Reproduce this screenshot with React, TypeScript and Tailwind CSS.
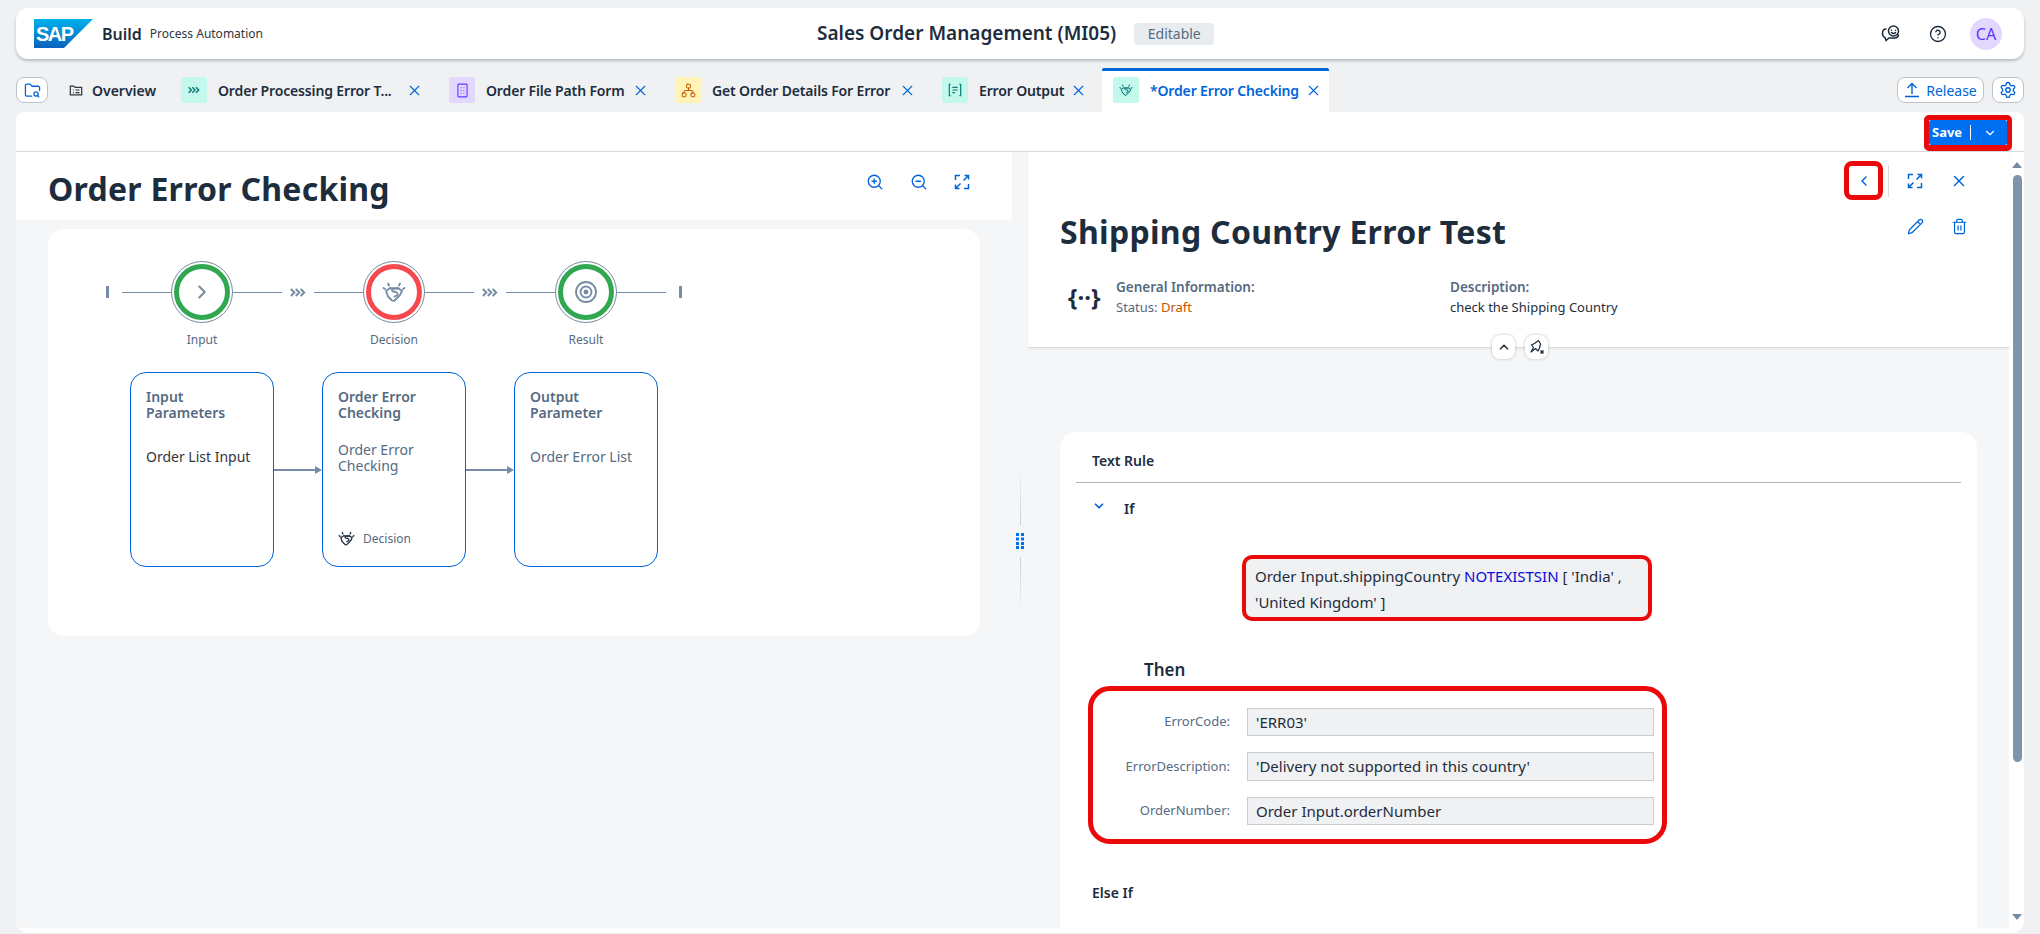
import { ChevronDown, ChevronLeft, ChevronRight, ChevronUp, CircleHelp, FolderSearch, Network, Pencil, Settings, Trash2, X, ZoomIn, ZoomOut } from "lucide-react";
import type { ReactNode } from "react";

function Triple({ className }: { className?: string }) {
    return (
        <svg viewBox="0 0 18 10" className={className} fill="none" stroke="currentColor" strokeWidth="2.2">
            <path d="M1 1l4 4-4 4M6.500 1l4 4-4 4M12 1l4 4-4 4" />
        </svg>
    );
}

function DecisionIcon({ className }: { className?: string }) {
    return (
        <svg viewBox="0 0 24 24" className={className} fill="none" stroke="currentColor" strokeWidth="1.8" strokeLinejoin="round" strokeLinecap="round">
            <path d="M1.500 8l1.500 1M6 3.500l1 2M22.500 8L21 9M18 3.500l-1 2" />
            <path d="M4 11l4-3 4 .5 4-.5 4 3-2 4-6 6-2-.5-4-4z" />
            <path d="M16 8.500h-4c-2 0-3 2-1 3l3 .5c2 .5 2 3 .5 3.500l-2 1" />
        </svg>
    );
}

function ExpandIcon({ className }: { className?: string }) {
    return (
        <svg viewBox="0 0 16 16" className={className} fill="none" stroke="currentColor" strokeWidth="1.500">
            <path d="M1.500 6V1.500H6M14.500 10v4.500H10" />
            <path d="M9.500 6.500l5-5M10.500 1.500h4V5.500M6.500 9.500l-5 5M1.500 10.500v4h4" />
        </svg>
    );
}

function Tab({ color, icon, label, labelWidth, active }: { color: string; icon: ReactNode; label: string; labelWidth: string; active?: boolean }) {
    return (
        <div className={`flex h-[44px] items-center ${active ? "w-[227px] rounded-t-[2px] border-t-[3px] border-[#0064d9] bg-white pb-[3px] pl-[11px]" : ""}`}>
            <div className={`flex h-[26px] w-[26px] items-center justify-center rounded-[3px] ${color}`}>{icon}</div>
            <span className={`ml-[11px] whitespace-nowrap text-[14px] font-semibold tracking-[-0.15px] ${labelWidth} ${active ? "text-[#0064d9]" : "text-[#1d2d3e]"}`}>{label}</span>
            <X className="ml-[8px] h-[17px] w-[17px] text-[#0064d9]" strokeWidth={1.6} />
        </div>
    );
}

function Stage({ ring, children }: { ring: string; children: ReactNode }) {
    return (
        <div className="flex h-[62px] w-[62px] items-center justify-center rounded-full border border-[#758ca4] bg-white">
            <div className={`flex h-[56px] w-[56px] items-center justify-center rounded-full border-[5px] text-[#758ca4] ${ring}`}>{children}</div>
        </div>
    );
}

function Line({ width }: { width: string }) {
    return <div className={`h-px bg-[#758ca4] ${width}`} />;
}

function FlowBox({ title, children }: { title: string; children: ReactNode }) {
    return (
        <div className="flex h-[195px] w-[144px] flex-col rounded-[16px] border border-[#0064d9] px-[15px] pt-[16px] text-[14px] leading-[16px]">
            <div className="font-semibold text-[#556b82]">{title}</div>
            {children}
        </div>
    );
}

function Arrow() {
    return (
        <div className="flex w-[48px] items-center">
            <div className="h-[2px] flex-1 bg-[#758ca4]" />
            <div className="h-0 w-0 border-y-[4px] border-l-[7px] border-y-transparent border-l-[#758ca4]" />
        </div>
    );
}

function Field({ label, value, height }: { label: string; value: string; height: string }) {
    return (
        <div className="flex items-center">
            <div className="w-[136px] text-right text-[13px] text-[#556b82]">{label}</div>
            <div className={`ml-[17px] flex w-[407px] items-center border border-b-[1.500px] border-[#c9cdd1] bg-[#eff1f2] pl-[8px] text-[15px] text-[#1d2d3e] ${height}`}>{value}</div>
        </div>
    );
}

export default function App() {
    return (
        <div className="flex h-[934px] w-[2040px] flex-col overflow-hidden bg-[#eff1f2] px-[16px] pt-[8px] font-['Noto_Sans',sans-serif] text-[#1d2d3e]">
            <header className="flex h-[51px] shrink-0 items-center rounded-[12px] bg-white pl-[18px] pr-[22px] shadow-[0_2px_3px_rgba(60,70,80,0.3)]">
                <div className="flex w-[783px] items-center">
                    <svg viewBox="0 0 59 29" className="h-[29px] w-[59px]">
                        <defs>
                            <linearGradient id="sapg" x1="0" y1="0" x2="0" y2="1">
                                <stop offset="0" stopColor="#00b1eb" />
                                <stop offset="1" stopColor="#0a62bd" />
                            </linearGradient>
                        </defs>
                        <path d="M0 0h59L30 29H0z" fill="url(#sapg)" />
                        <text x="2" y="22" fill="#fff" fontSize="20" fontWeight="800" fontFamily="Liberation Sans" letterSpacing="-1.5">SAP</text>
                    </svg>
                    <span className="ml-[9px] text-[16px] font-semibold">Build</span>
                    <span className="ml-[8px] text-[12px] text-[#32363a]">Process Automation</span>
                </div>
                <div className="flex items-center">
                    <span className="text-[19px] font-semibold">Sales Order Management (MI05)</span>
                    <span className="ml-[18px] flex h-[22px] w-[80px] items-center justify-center rounded-[4px] bg-[#e9ecee] text-[14px] text-[#556b82]">Editable</span>
                </div>
                <div className="ml-auto flex items-center">
                    <svg viewBox="0 0 20 20" className="h-[20px] w-[20px]" fill="none" stroke="#1d2d3e" strokeWidth="1.500" strokeLinecap="round">
                        <circle cx="12.500" cy="7" r="5" />
                        <path d="M10.500 6.200h.01M14.500 6.200h.01M10.500 8.500c1 1.200 3 1.200 4 0" />
                        <path d="M5 5C2.500 5 1.500 7 1.500 9.500c0 2 1 3.500 2.500 4l1 3 3-2.500h6c2 0 3-1 3.500-3" />
                    </svg>
                    <CircleHelp className="ml-[28px] h-[18px] w-[18px]" strokeWidth={1.8} />
                    <div className="ml-[23px] flex h-[32px] w-[32px] items-center justify-center rounded-full bg-[#e2d8ff] text-[16px] text-[#5d36ff]">CA</div>
                </div>
            </header>

            <div className="mt-[9px] flex h-[44px] shrink-0 items-start">
                <div className="mt-[9px] flex h-[26px] w-[32px] items-center justify-center rounded-[8px] border border-[#bcc3ca] bg-white">
                    <FolderSearch className="h-[17px] w-[17px] text-[#0064d9]" strokeWidth={1.8} />
                </div>
                <div className="ml-[21px] flex h-[44px] w-[112px] items-center">
                    <svg viewBox="0 0 16 16" className="h-[14px] w-[14px]" fill="none" stroke="#32363a" strokeWidth="1.400">
                        <path d="M1.500 13.500v-10h4l1.500 1.500h7.500v8.500zM4.500 8h1M7.500 8h4.500M4.500 11h1M7.500 11h4.500" />
                    </svg>
                    <span className="ml-[9px] text-[14px] font-semibold">Overview</span>
                </div>
                <Tab color="bg-[#c2f9ec]" label="Order Processing Error T..." labelWidth="w-[180px]" icon={<Triple className="h-[8px] w-[12px] text-[#0f7d78]" />} />
                <div className="ml-[26px]">
                    <Tab color="bg-[#e2d8ff]" label="Order File Path Form" labelWidth="w-[138px]" icon={
                        <svg viewBox="0 0 12 16" className="h-[15px] w-[11px]" fill="none" stroke="#5d36ff" strokeWidth="1.200">
                            <rect x="1" y="1" width="10" height="14" rx="1" />
                            <path d="M4 5h1M7 5h1M4 8h1M7 8h1M4 11h1M7 11h1" />
                        </svg>
                    } />
                </div>
                <div className="ml-[26px]">
                    <Tab color="bg-[#fff3b8]" label="Get Order Details For Error" labelWidth="w-[179px]" icon={<Network className="h-[15px] w-[15px] text-[#c35500]" strokeWidth={1.6} />} />
                </div>
                <div className="ml-[26px]">
                    <Tab color="bg-[#c2f9ec]" label="Error Output" labelWidth="w-[83px]" icon={
                        <svg viewBox="0 0 16 16" className="h-[14px] w-[14px]" fill="none" stroke="#0f7d78" strokeWidth="1.400">
                            <path d="M3 1.500H1.500v13H3M13 1.500h1.500v13H13M5 5h6M5 8h6M5 11h3" />
                        </svg>
                    } />
                </div>
                <div className="ml-[15px]">
                    <Tab active color="bg-[#c2f9ec]" label="*Order Error Checking" labelWidth="w-[147px]" icon={<DecisionIcon className="h-[14px] w-[14px] text-[#0f7d78]" />} />
                </div>
                <div className="ml-auto mt-[9px] flex items-center">
                    <div className="flex h-[26px] w-[87px] items-center justify-center rounded-[8px] border border-[#bcc3ca] bg-white text-[14px] text-[#0064d9]">
                        <svg viewBox="0 0 16 16" className="h-[16px] w-[16px]" fill="none" stroke="currentColor" strokeWidth="1.400">
                            <path d="M1 14.500h14M8 12V2M3.500 6L8 1.500 12.500 6" />
                        </svg>
                        <span className="ml-[6px]">Release</span>
                    </div>
                    <div className="ml-[8px] flex h-[26px] w-[32px] items-center justify-center rounded-[8px] border border-[#bcc3ca] bg-white">
                        <Settings className="h-[18px] w-[18px] text-[#0064d9]" strokeWidth={1.8} />
                    </div>
                </div>
            </div>

            <main className="flex h-[821px] shrink-0 flex-col overflow-hidden rounded-t-[8px] rounded-b-[12px] bg-white pb-[5px]">
                <div className="flex h-[40px] shrink-0 justify-end border-b border-[#d9dcdf] pr-[12px] pt-[3px]">
                    <div className="flex h-[36px] w-[88px] items-center rounded-[5px] border-[5px] border-b-[6px] border-[#ea0a0a]">
                        <div className="flex h-[25px] w-full items-center rounded-[2px] bg-[#0070f2] text-[13px] font-bold text-white">
                            <span className="pl-[3px]">Save</span>
                            <div className="ml-[8px] h-[15px] w-px bg-white" />
                            <ChevronDown className="ml-[12px] h-[14px] w-[14px]" strokeWidth={2} />
                        </div>
                    </div>
                </div>

                <div className="flex min-h-0 flex-1">
                    <section className="w-[996px] shrink-0 bg-[#f5f6f7]">
                        <div className="flex h-[68px] items-start justify-between bg-white pl-[32px] pr-[42px]">
                            <h1 className="mt-[16px] text-[32px] font-bold leading-[42px] tracking-[0.25px]">Order Error Checking</h1>
                            <div className="mt-[21px] flex items-center gap-[26px] text-[#0064d9]">
                                <ZoomIn className="h-[18px] w-[18px]" strokeWidth={1.7} />
                                <ZoomOut className="h-[18px] w-[18px]" strokeWidth={1.7} />
                                <ExpandIcon className="h-[16px] w-[16px]" />
                            </div>
                        </div>
                        <div className="ml-[32px] mt-[9px] h-[407px] w-[932px] rounded-[16px] bg-white pt-[32px]">
                            <div className="flex h-[62px] items-center pl-[58px]">
                                <div className="h-[12px] w-[3px] bg-[#758ca4]" />
                                <div className="ml-[13px]"><Line width="w-[49px]" /></div>
                                <Stage ring="border-[#30a750]"><ChevronRight className="h-[22px] w-[22px]" strokeWidth={2.2} /></Stage>
                                <Line width="w-[49px]" />
                                <Triple className="ml-[8px] h-[9px] w-[16px] text-[#758ca4]" />
                                <div className="ml-[8px]"><Line width="w-[49px]" /></div>
                                <Stage ring="border-[#f5494e]"><DecisionIcon className="h-[24px] w-[24px]" /></Stage>
                                <Line width="w-[49px]" />
                                <Triple className="ml-[8px] h-[9px] w-[16px] text-[#758ca4]" />
                                <div className="ml-[8px]"><Line width="w-[49px]" /></div>
                                <Stage ring="border-[#30a750]">
                                    <svg viewBox="0 0 24 24" className="h-[24px] w-[24px]" fill="none" stroke="currentColor" strokeWidth="1.800">
                                        <circle cx="12" cy="12" r="10" />
                                        <circle cx="12" cy="12" r="5.500" />
                                        <circle cx="12" cy="12" r="1.500" fill="currentColor" />
                                    </svg>
                                </Stage>
                                <Line width="w-[49px]" />
                                <div className="ml-[13px] h-[12px] w-[3px] bg-[#758ca4]" />
                            </div>
                            <div className="mt-[9px] flex gap-[100px] pl-[108px] text-[12px] leading-[16px] text-[#556b82]">
                                <div className="w-[92px] text-center">Input</div>
                                <div className="w-[92px] text-center">Decision</div>
                                <div className="w-[92px] text-center">Result</div>
                            </div>
                            <div className="mt-[24px] flex items-center pl-[82px]">
                                <FlowBox title="Input Parameters">
                                    <div className="mt-[28px] text-[#32363a]">Order List Input</div>
                                </FlowBox>
                                <Arrow />
                                <FlowBox title="Order Error Checking">
                                    <div className="mt-[21px] text-[#556b82]">Order Error Checking</div>
                                    <div className="mb-[19px] mt-auto flex items-center text-[12px] text-[#556b82]">
                                        <DecisionIcon className="h-[17px] w-[17px] text-[#1d2d3e]" />
                                        <span className="ml-[8px]">Decision</span>
                                    </div>
                                </FlowBox>
                                <Arrow />
                                <FlowBox title="Output Parameter">
                                    <div className="mt-[28px] text-[#556b82]">Order Error List</div>
                                </FlowBox>
                            </div>
                        </div>
                    </section>

                    <div className="flex w-[16px] shrink-0 flex-col items-center bg-[#f5f6f7] pt-[313px]">
                        <div className="h-[60px] w-px bg-gradient-to-b from-transparent to-[#cdd1d5]" />
                        <svg viewBox="0 0 8 16" className="mt-[8px] h-[16px] w-[8px]" fill="#0070f2">
                            <rect x="0" y="0" width="3" height="3" /><rect x="5" y="0" width="3" height="3" />
                            <rect x="0" y="4.500" width="3" height="3" /><rect x="5" y="4.500" width="3" height="3" />
                            <rect x="0" y="9" width="3" height="3" /><rect x="5" y="9" width="3" height="3" />
                            <rect x="0" y="13" width="3" height="3" /><rect x="5" y="13" width="3" height="3" />
                        </svg>
                        <div className="mt-[8px] h-[60px] w-px bg-gradient-to-b from-[#cdd1d5] to-transparent" />
                    </div>

                    <section className="flex min-w-0 flex-1 flex-col bg-[#f5f6f7]">
                        <div className="relative h-[196px] shrink-0 border-b border-[#d9dcdf] bg-white shadow-[0_1px_2px_rgba(60,70,80,0.08)]">
                            <div className="flex justify-end pr-[34px] pt-[9px]">
                                <div className="flex h-[39px] w-[39px] items-center justify-center rounded-[8px] border-[5px] border-[#ea0a0a]">
                                    <ChevronLeft className="h-[16px] w-[16px] text-[#0064d9]" strokeWidth={2.2} />
                                </div>
                                <div className="ml-[5px] mt-[4px] h-[32px] w-px bg-[#d9dcdf]" />
                                <div className="ml-[10px] flex h-[39px] w-[32px] items-center justify-center text-[#0064d9]"><ExpandIcon className="h-[16px] w-[16px]" /></div>
                                <div className="ml-[12px] flex h-[39px] w-[32px] items-center justify-center text-[#0064d9]"><X className="h-[18px] w-[18px]" strokeWidth={1.8} /></div>
                            </div>
                            <div className="flex items-start justify-between pl-[32px] pr-[34px]">
                                <h2 className="mt-[9px] text-[32px] font-bold leading-[46px] tracking-[0.3px]">Shipping Country Error Test</h2>
                                <div className="mt-[10px] flex gap-[12px] text-[#0064d9]">
                                    <div className="flex h-[32px] w-[32px] items-center justify-center"><Pencil className="h-[17px] w-[17px]" strokeWidth={1.7} /></div>
                                    <div className="flex h-[32px] w-[32px] items-center justify-center"><Trash2 className="h-[17px] w-[17px]" strokeWidth={1.7} /></div>
                                </div>
                            </div>
                            <div className="mt-[22px] flex items-center pl-[40px] text-[13px] leading-[20px]">
                                <span className="w-[48px] text-[24px] font-bold leading-[24px] text-[#1d2d3e]">{"{··}"}</span>
                                <div className="w-[334px]">
                                    <div className="text-[13.500px] font-semibold text-[#556b82]">General Information:</div>
                                    <div className="text-[#556b82]">Status: <span className="text-[#c35500]">Draft</span></div>
                                </div>
                                <div>
                                    <div className="text-[13.500px] font-semibold text-[#556b82]">Description:</div>
                                    <div>check the Shipping Country</div>
                                </div>
                            </div>
                            <div className="absolute bottom-[-12px] left-[464px] flex gap-[10px]">
                                <div className="flex h-[24px] w-[23px] items-center justify-center rounded-[8px] bg-white shadow-[0_0_3px_rgba(60,70,80,0.35)]"><ChevronUp className="h-[14px] w-[14px]" strokeWidth={2.6} /></div>
                                <div className="flex h-[24px] w-[23px] items-center justify-center rounded-[8px] bg-white shadow-[0_0_3px_rgba(60,70,80,0.35)]">
                                    <svg viewBox="0 0 16 16" className="h-[16px] w-[16px]" fill="none" stroke="#1d2d3e" strokeWidth="1.200" strokeLinejoin="round">
                                        <path d="M9.500 1.500l2 3.500-1 4-1.500 3-2.500-2.500L2 13l2.500-4.500L2.500 6l3-1.500z" />
                                        <path d="M11.500 11.500l3 3M14.500 11.500l-3 3" strokeWidth="1.500" />
                                    </svg>
                                </div>
                            </div>
                        </div>
                        <div className="min-h-0 flex-1 pl-[32px] pt-[84px]">
                            <div className="h-[496px] w-[917px] overflow-hidden rounded-t-[16px] bg-white">
                                <div className="ml-[16px] mr-[16px] flex h-[51px] items-end border-b border-[#a9b4be] pb-[11px] pl-[16px] text-[14px] font-semibold">Text Rule</div>
                                <div className="mt-[15px] flex items-center pl-[32px] text-[14px] font-semibold">
                                    <ChevronDown className="mb-[6px] h-[14px] w-[14px] text-[#0064d9]" strokeWidth={3} />
                                    <span className="ml-[18px]">If</span>
                                </div>
                                <div className="ml-[182px] mt-[36px] h-[66px] w-[410px] rounded-[10px] border-[4px] border-[#ea0a0a] bg-[#eff1f2] pl-[9px] text-[15px] leading-[26px]">
                                    <div className="mt-[4px]">Order Input.shippingCountry <span className="text-[#0a0ad8]">NOTEXISTSIN</span> [ 'India' ,</div>
                                    <div>'United Kingdom' ]</div>
                                </div>
                                <div className="ml-[84px] mt-[37px] text-[17px] font-semibold leading-[24px]">Then</div>
                                <div className="ml-[28px] mt-[4px] flex h-[158px] w-[579px] flex-col rounded-[22px] border-[5px] border-[#ea0a0a] pl-[1px] pt-[17px]">
                                    <Field label="ErrorCode:" value="'ERR03'" height="h-[28px]" />
                                    <div className="mt-[16px]"><Field label="ErrorDescription:" value="'Delivery not supported in this country'" height="h-[29px]" /></div>
                                    <div className="mt-[16px]"><Field label="OrderNumber:" value="Order Input.orderNumber" height="h-[28px]" /></div>
                                </div>
                                <div className="ml-[32px] mt-[38px] text-[14px] font-semibold">Else If</div>
                            </div>
                        </div>
                    </section>

                    <div className="flex w-[15px] shrink-0 flex-col items-center pl-px pt-[10px]">
                        <div className="h-0 w-0 border-x-[5px] border-b-[6px] border-x-transparent border-b-[#758ca4]" />
                        <div className="mt-[7px] h-[587px] w-[9px] rounded-full bg-[#7f94aa]" />
                        <div className="mt-[152px] h-0 w-0 border-x-[5px] border-t-[6px] border-x-transparent border-t-[#758ca4]" />
                    </div>
                </div>
            </main>
        </div>
    );
}
